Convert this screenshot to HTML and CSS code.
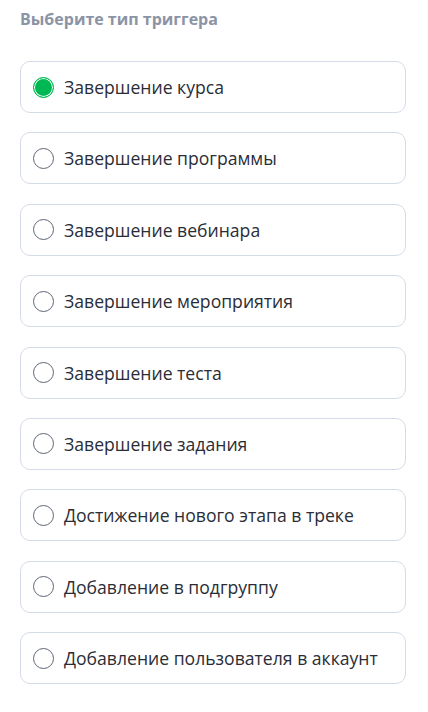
FILE: index.html
```html
<!DOCTYPE html>
<html lang="ru">
<head>
<meta charset="utf-8">
<link rel="stylesheet" href="styles.css">
</head>
<body>
<div class="page">
  <div class="title">Выберите тип триггера</div>
  <div class="list">
    <label class="option"><span class="radio checked"></span><span class="label">Завершение курса</span></label>
    <label class="option"><span class="radio"></span><span class="label">Завершение программы</span></label>
    <label class="option"><span class="radio"></span><span class="label">Завершение вебинара</span></label>
    <label class="option"><span class="radio"></span><span class="label">Завершение мероприятия</span></label>
    <label class="option"><span class="radio"></span><span class="label">Завершение теста</span></label>
    <label class="option"><span class="radio"></span><span class="label">Завершение задания</span></label>
    <label class="option"><span class="radio"></span><span class="label">Достижение нового этапа в треке</span></label>
    <label class="option"><span class="radio"></span><span class="label">Добавление в подгруппу</span></label>
    <label class="option"><span class="radio"></span><span class="label">Добавление пользователя в аккаунт</span></label>
  </div>
</div>
</body>
</html>
```
FILE: styles.css
```css
html, body {
  margin: 0;
  padding: 0;
  background: #ffffff;
}
body {
  font-family: "Open Sans", "Noto Sans", sans-serif;
}
.page {
  padding: 8px 22px 0 20px;
}
.title {
  font-size: 16px;
  font-weight: 700;
  color: #8b94a5;
  line-height: 22px;
  height: 22px;
}
.list {
  margin-top: 31px;
  display: flex;
  flex-direction: column;
  gap: 19.4px;
}
.option {
  box-sizing: border-box;
  height: 52px;
  border: 1px solid #d5dce8;
  border-radius: 10px;
  display: flex;
  align-items: center;
  padding: 0 12px;
  gap: 10px;
}
.radio {
  box-sizing: border-box;
  width: 21px;
  height: 21px;
  border-radius: 50%;
  border: 1.5px solid #5f6675;
  flex: none;
}
.radio.checked {
  border: 1px solid #00b853;
  background: #00b853;
  box-shadow: inset 0 0 0 1px #ffffff;
}
.label {
  font-size: 17.6px;
  color: #2a2d36;
  line-height: 24px;
}
```
